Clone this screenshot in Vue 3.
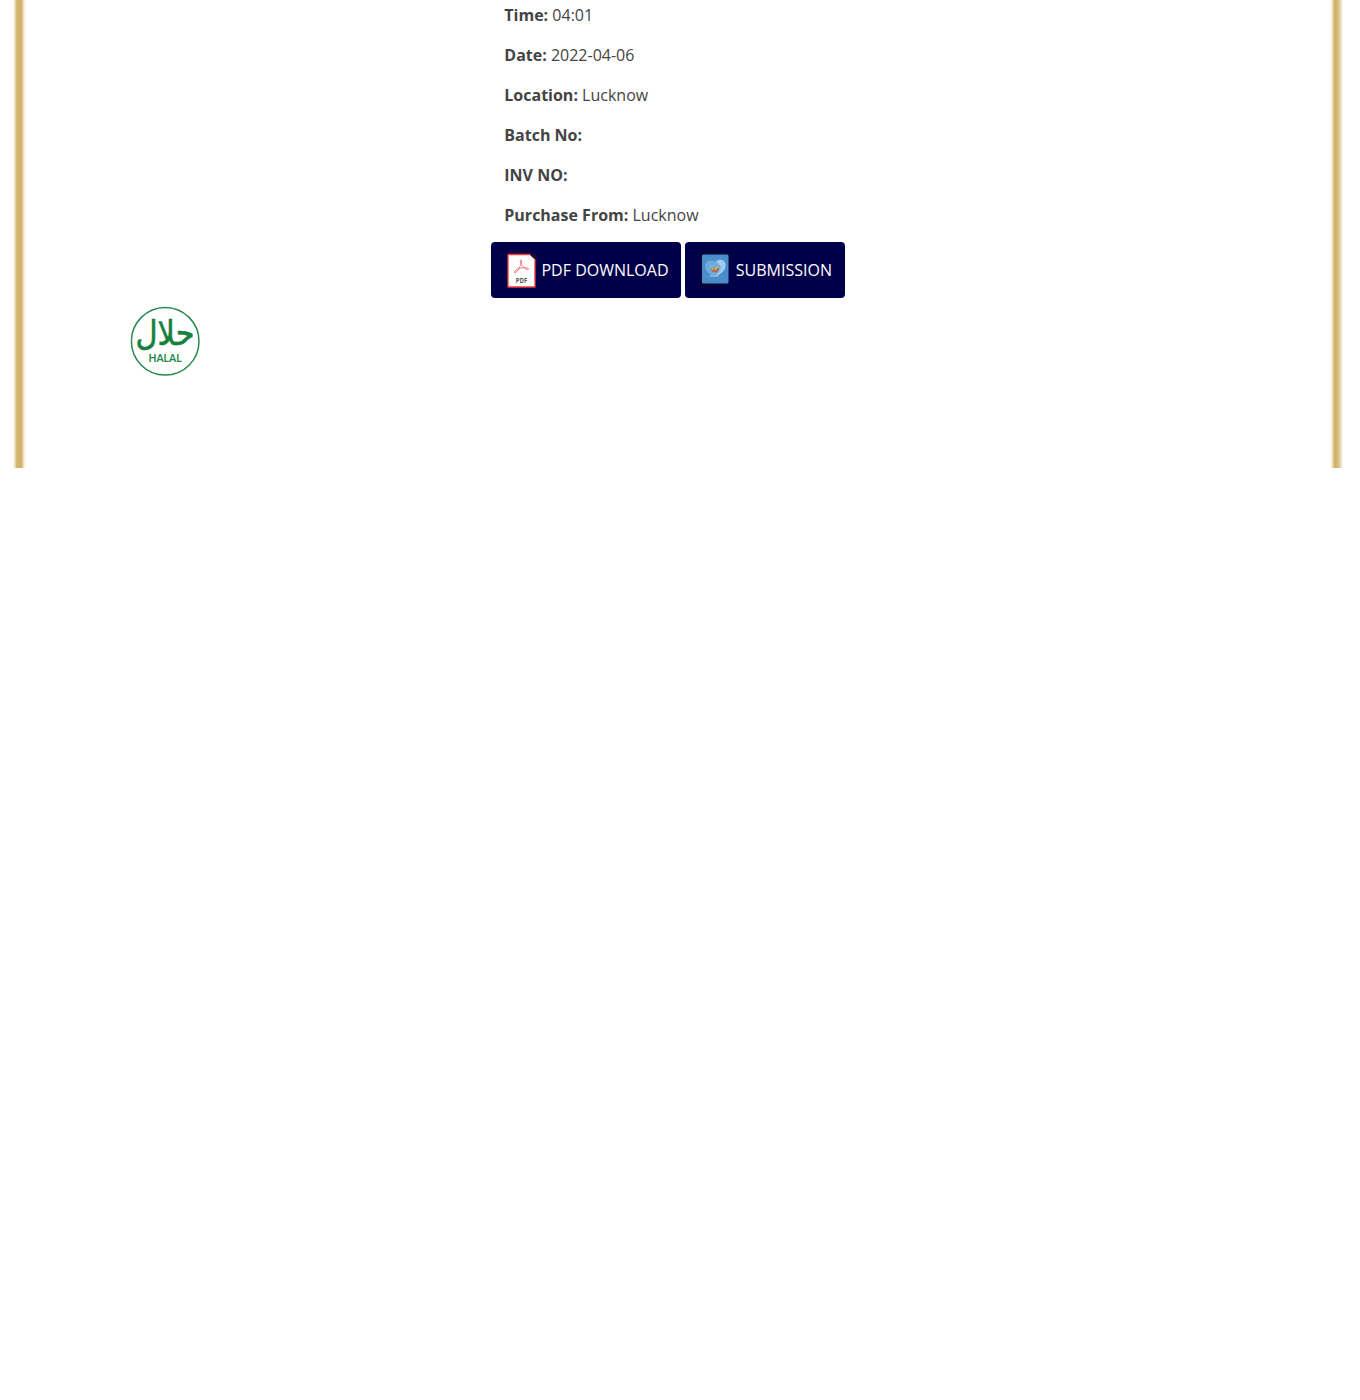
<script setup>
const details = [
  { label: 'Time:', value: '04:01' },
  { label: 'Date:', value: '2022-04-06' },
  { label: 'Location:', value: 'Lucknow' },
  { label: 'Batch No:', value: '' },
  { label: 'INV NO:', value: '' },
  { label: 'Purchase From:', value: 'Lucknow' },
]
</script>

<template>
  <main class="certificate">
    <div class="rail left"></div>
    <div class="content">
      <section class="details">
        <p v-for="item in details" :key="item.label"><strong>{{ item.label }}</strong> {{ item.value }}</p>
      </section>
      <div class="actions">
        <a class="button pdf">
          <svg class="icon" width="40" height="42" viewBox="0 0 40 42">
            <path d="M5 5 15 1 35 5 34 38 8 39Z" fill="#10083f" />
            <path d="M6 5.500H27L33 11V38H6Z" fill="#fff" stroke="#ee3a36" stroke-width="1.300" stroke-linejoin="round" />
            <path d="M27 5.500V11H33" fill="#fff" stroke="#f9cccb" stroke-width=".6" />
            <path d="M12.500 23c1-3 7-5 13-4 3 1 0 3-3 0-3-3-5-6-4-8 2-1 1 5-2 9-2 4-4 5-4 3Z" fill="none" stroke="#ef6b6d" stroke-width=".9" />
            <text x="19.500" y="33.500" text-anchor="middle" textLength="11.500" lengthAdjust="spacingAndGlyphs" class="pdf-label">PDF</text>
          </svg>
          <span>PDF DOWNLOAD</span>
        </a>
        <a class="button submit">
          <svg class="icon" width="40" height="42" viewBox="0 0 40 42">
            <path d="M4 4 14 1 34 5 31 37 5 39Z" fill="#080637" />
            <rect x="6" y="5.500" width="26.500" height="29" rx="1.500" fill="#4b8ccc" />
            <path d="M19 13c-3-3-10-1-10 4 0 6 6 9 10 11 5-2 10-6 10-12 0-6-8-7-10-3Z" fill="#6eabdf" />
            <path d="M20.500 13c3-4 9-2 9 3 0 6-5 9-11 12 4-4 7-7 6-11Z" fill="#a1cbed" />
            <path d="M13.500 27h9" stroke="#86bce5" stroke-width="1.500" />
            <path d="M15 18q4 4 8 0v3q-1.500 3-4 3t-4-3Z" fill="#af8060" />
            <path d="M14.500 17l4 3 1-2 4-1-3 4h-4Z" fill="#d5b057" />
            <path d="M16.500 22h5" stroke="#a74d54" />
            <path d="M17.500 20h1M20.500 20h1" stroke="#443d67" />
          </svg>
          <span>SUBMISSION</span>
        </a>
      </div>
      <svg class="halal" width="72" height="72" viewBox="0 0 72 72">
        <circle cx="36.200" cy="36.300" r="33.800" fill="#fff" stroke="#26884d" stroke-width="1.500" />
        <text x="30.500" y="34" text-anchor="middle" textLength="50" lengthAdjust="spacingAndGlyphs" transform="scale(1.18)" class="arabic">حلال</text>
        <text x="36" y="57" text-anchor="middle" textLength="33" lengthAdjust="spacingAndGlyphs" class="latin">HALAL</text>
      </svg>
    </div>
    <div class="rail right"></div>
  </main>
</template>

<style>
body { margin: 0; background: #fff; }
</style>

<style scoped>
.certificate { display: flex; height: 468px; font: 16px/24px "Open Sans", sans-serif; color: #444; }
.rail { flex: none; width: 28px; background: linear-gradient(90deg, #fff 0 13px, #eee0bd 15px, #d6b979 16.500px, #d0af69 20px, #d6b979 22px, #f5ecd7 24px, #fffdf8 26px, #fff 28px); }
.right { margin-right: 3px; background: linear-gradient(90deg, #fff 0, #fffaf0 2px, #eee0bd 3.500px, #d1b16c 5.500px, #d3b573 8px, #e4d0a0 11px, #fff 14px); }
.content { flex: 1; }
.details { margin-left: 476.300px; padding-top: 3px; font-weight: 400; }
.details p { margin: 0 0 16px; }
.details strong { font-weight: 700; }
.actions { display: flex; gap: 4px; margin-left: 463.200px; margin-top: -1.500px; }
.button { box-sizing: border-box; display: flex; height: 56.500px; border-radius: 4px; background: #00004a; color: #fff; white-space: nowrap; }
.pdf { width: 190.300px; }
.submit { width: 159.200px; }
.icon { flex: none; margin: 7px 0 0 10.800px; }
.button span { margin: 16.500px 0 0 -.5px; }
.halal { display: block; margin: 6.500px 0 0 101px; }
.pdf-label { font: 700 6.500px "Open Sans", sans-serif; fill: #555; }
.arabic { font: 400 29px "DejaVu Sans", sans-serif; fill: #17803f; stroke: #17803f; stroke-width: .5px; }
.latin { font: 700 11px Lato, sans-serif; fill: #26884d; }
</style>
